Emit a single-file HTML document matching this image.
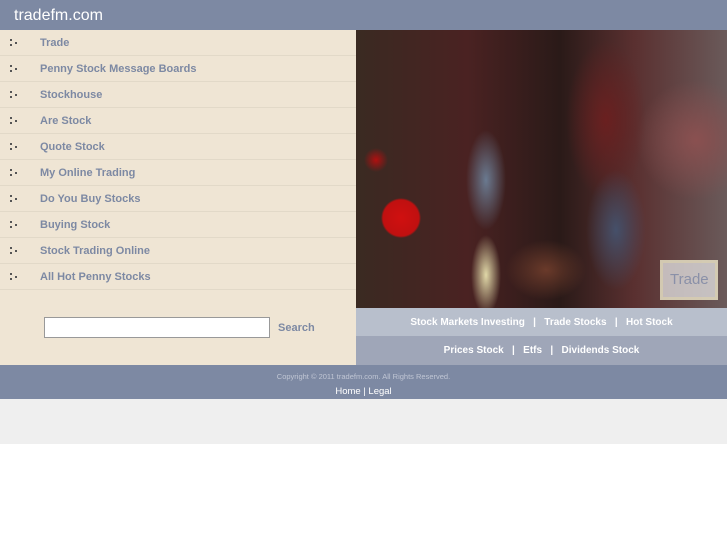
<!DOCTYPE html>
<html><head><style>
*{margin:0;padding:0;box-sizing:border-box}
body{width:727px;height:545px;background:#fff;font-family:"Liberation Sans",sans-serif;position:relative;overflow:hidden}
#hd{position:absolute;left:0;top:0;width:727px;height:30px;background:#7d89a3;color:#fff;font-size:16px;padding:7px 0 0 14px}
#left{position:absolute;left:0;top:30px;width:356px;height:335px;background:#efe5d4}
.row{height:26px;border-bottom:1px solid #e2d9c8;position:relative;font-size:11px;font-weight:bold;color:#7d89a3;padding:7px 0 0 40px}
.row i{position:absolute;left:10px;top:9px;width:8px;height:8px}
.row i:before{content:"";position:absolute;left:0;top:0;width:2px;height:2px;background:#555;box-shadow:0 5px 0 #555,5px 3px 0 #555}
#srch{position:absolute;left:44px;top:287px;width:226px;height:21px;background:#fff;border:1px solid #999}
#sb{position:absolute;left:278px;top:292px;font-size:11px;font-weight:bold;color:#7d89a3}
#img{position:absolute;left:356px;top:30px;width:371px;height:278px;background:
radial-gradient(circle at 45px 188px,#d01010 0,#c01010 18px,transparent 20px),
radial-gradient(circle at 20px 130px,#b01010 0,transparent 12px),
radial-gradient(ellipse 40px 30px at 190px 240px,#6a3a2a,transparent),
radial-gradient(ellipse 30px 60px at 260px 200px,#45506a,transparent),
radial-gradient(ellipse 20px 50px at 130px 150px,#6a7a90,transparent),
radial-gradient(ellipse 15px 40px at 130px 245px,#e0d8a8,transparent),
radial-gradient(ellipse 40px 80px at 250px 90px,#6a2020,transparent),
radial-gradient(ellipse 60px 60px at 340px 110px,#8a5050,transparent),
linear-gradient(90deg,#3a2a22 0,#4a2222 30%,#2a1a18 55%,#5a3030 75%,#6a5a5a 100%)}
#tr{position:absolute;left:660px;top:260px;width:58px;height:40px;background:rgba(230,230,230,.75);border:3px solid rgba(215,205,175,.8);color:#8a90a8;font-size:15px;padding:8px 0 0 7px}
#n1{position:absolute;left:356px;top:308px;width:371px;height:28px;background:#b8bfcc;color:#fff;font-size:10px;font-weight:bold;text-align:center;padding-top:9px}
#n2{position:absolute;left:356px;top:336px;width:371px;height:29px;background:#9fa6b8;color:#fff;font-size:10px;font-weight:bold;text-align:center;padding-top:9px}
#ft{position:absolute;left:0;top:365px;width:727px;height:34px;background:#7d89a3;text-align:center;color:#fff}
#ft .c{font-size:7.5px;color:#c0c6d4;padding-top:7px}
#ft .l{font-size:9.5px;padding-top:5px}
#gb{position:absolute;left:0;top:399px;width:727px;height:45px;background:#efefef}
</style></head><body>
<div id="hd">tradefm.com</div>
<div id="left">
<div class="row"><i></i>Trade</div>
<div class="row"><i></i>Penny Stock Message Boards</div>
<div class="row"><i></i>Stockhouse</div>
<div class="row"><i></i>Are Stock</div>
<div class="row"><i></i>Quote Stock</div>
<div class="row"><i></i>My Online Trading</div>
<div class="row"><i></i>Do You Buy Stocks</div>
<div class="row"><i></i>Buying Stock</div>
<div class="row"><i></i>Stock Trading Online</div>
<div class="row"><i></i>All Hot Penny Stocks</div>
<div id="srch"></div><div id="sb">Search</div>
</div>
<div id="img"></div>
<div id="tr">Trade</div>
<div id="n1">Stock Markets Investing &nbsp; | &nbsp; Trade Stocks &nbsp; | &nbsp; Hot Stock</div>
<div id="n2">Prices Stock &nbsp; | &nbsp; Etfs &nbsp; | &nbsp; Dividends Stock</div>
<div id="ft"><div class="c">Copyright © 2011 tradefm.com. All Rights Reserved.</div><div class="l">Home | Legal</div></div>
<div id="gb"></div>
</body></html>
